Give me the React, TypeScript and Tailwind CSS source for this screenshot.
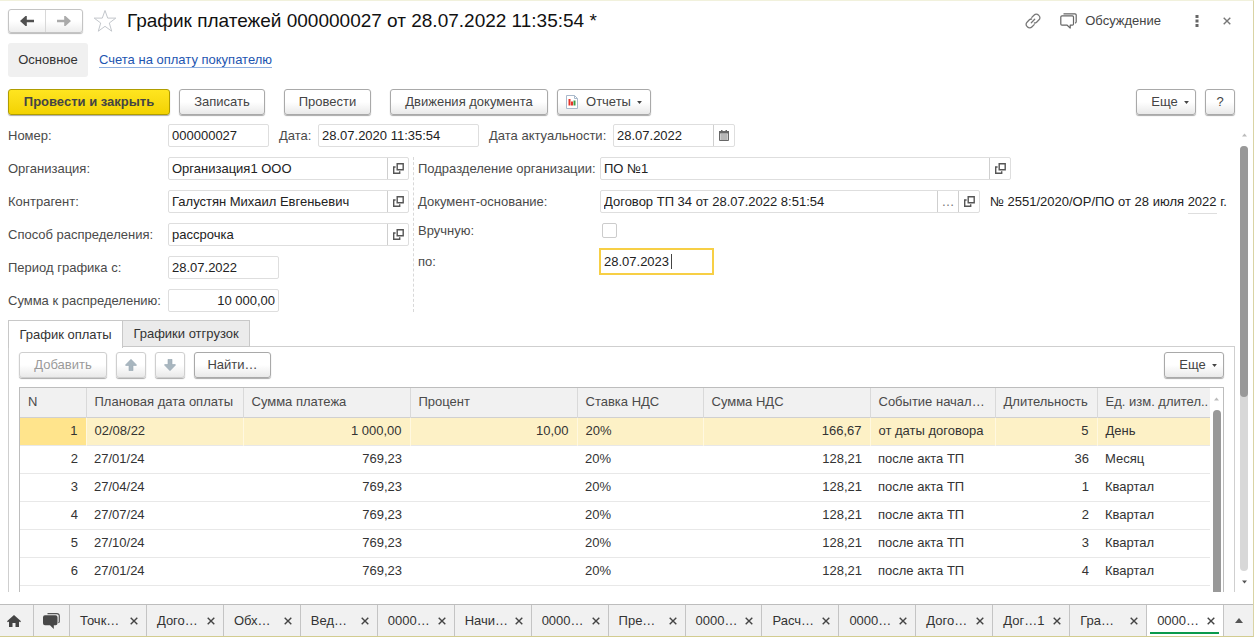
import type { ReactNode } from "react";
import clsx from "clsx";

type Align = "left" | "right";

type Column = {
  title: string;
  width: string; // Tailwind width class for the <col>
  align: Align;
};

const COLUMNS: Column[] = [
  { title: "N", width: "w-[66px]", align: "right" },
  { title: "Плановая дата оплаты", width: "w-[157px]", align: "left" },
  { title: "Сумма платежа", width: "w-[167px]", align: "right" },
  { title: "Процент", width: "w-[167px]", align: "right" },
  { title: "Ставка НДС", width: "w-[126px]", align: "left" },
  { title: "Сумма НДС", width: "w-[167px]", align: "right" },
  { title: "Событие начал…", width: "w-[125px]", align: "left" },
  { title: "Длительность", width: "w-[102px]", align: "right" },
  { title: "Ед. изм. длител..", width: "w-auto", align: "left" },
];

const ROWS: string[][] = [
  ["1", "02/08/22", "1 000,00", "10,00", "20%", "166,67", "от даты договора", "5", "День"],
  ["2", "27/01/24", "769,23", "", "20%", "128,21", "после акта ТП", "36", "Месяц"],
  ["3", "27/04/24", "769,23", "", "20%", "128,21", "после акта ТП", "1", "Квартал"],
  ["4", "27/07/24", "769,23", "", "20%", "128,21", "после акта ТП", "2", "Квартал"],
  ["5", "27/10/24", "769,23", "", "20%", "128,21", "после акта ТП", "3", "Квартал"],
  ["6", "27/01/24", "769,23", "", "20%", "128,21", "после акта ТП", "4", "Квартал"],
  ["", "", "", "", "", "", "", "", ""],
];

const WINDOWS = [
  "Точк…",
  "Дого…",
  "Обх…",
  "Вед…",
  "0000…",
  "Начи…",
  "0000…",
  "Пре…",
  "0000…",
  "Расч…",
  "0000…",
  "Дого…",
  "Дог…1",
  "Гра…",
  "0000…",
];

/* ================= ICONS ================= */

function ArrowIcon({ className }: { className?: string }) {
  return (
    <svg viewBox="0 0 14 10" className={clsx("h-[10px] w-[14px]", className)} aria-hidden="true">
      <path d="M0 5L5.500 0h1.300v3.700H14v2.600H6.800V10H5.500z" fill="currentColor" />
    </svg>
  );
}

function StarIcon() {
  return (
    <svg viewBox="0 0 24 24" className="h-6 w-6 text-[#c3c7cc]" aria-hidden="true">
      <path
        d="M12 1.5l2.7 7.6h8.1l-6.5 4.9 2.4 8.2-6.7-4.9-6.7 4.9 2.4-8.2L1.2 9.1h8.1z"
        fill="none"
        stroke="currentColor"
      />
    </svg>
  );
}

function LinkIcon() {
  return (
    <svg viewBox="0 0 16 16" className="h-4 w-4" aria-hidden="true">
      <g fill="none" stroke="#777" strokeWidth="1.3" strokeLinecap="round">
        <path d="M6.800 4.400l2.400-2.400a2.900 2.900 0 0 1 4.200 0l.6.6a2.900 2.900 0 0 1 0 4.200l-2.400 2.400a2.900 2.900 0 0 1-2.200.8" />
        <path d="M9.200 11.600L6.800 14a2.900 2.900 0 0 1-4.200 0l-.6-.6a2.900 2.900 0 0 1 0-4.200l2.400-2.400a2.900 2.900 0 0 1 2.200-.8" />
        <path d="M6.300 9.700l3.400-3.400" />
      </g>
    </svg>
  );
}

function ChatIcon() {
  return (
    <svg viewBox="0 0 17 16" className="h-4 w-[17px]" aria-hidden="true">
      <g fill="none" stroke="#666" strokeWidth="1.2" strokeLinejoin="round">
        <path d="M3.500.800h11.500q1.200 0 1.200 1.200v6.800q0 1.200-1.200 1.300" />
        <path d="M2 2.800h10.300q1.200 0 1.200 1.200v7q0 1.200-1.200 1.200h-2.100v2.900l-3-2.900H2Q.800 12.200.800 11V4Q.800 2.800 2 2.800z" />
      </g>
    </svg>
  );
}

function ChatSolidIcon() {
  return (
    <svg viewBox="0 0 17 16" className="h-4 w-[17px]" aria-hidden="true">
      <path
        d="M4.500.600H14a2.300 2.300 0 0 1 2.300 2.300v5.600q0 1-1 1.300"
        fill="none"
        stroke="#555"
        strokeWidth="1.2"
      />
      <path
        d="M2 2.200h10.500a2 2 0 0 1 2 2v6a2 2 0 0 1-2 2h-1.700v3.800L7 12.200H2a2 2 0 0 1-2-2v-6a2 2 0 0 1 2-2z"
        fill="#484848"
      />
    </svg>
  );
}

function HomeIcon() {
  return (
    <svg viewBox="0 0 14 12" className="h-3 w-[14px]" aria-hidden="true">
      <path d="M7 0l7 6.3-.9 1-1.100-.9V12H8.500V8h-3v4H2V6.400l-1.100.9-.9-1z" fill="#444" />
    </svg>
  );
}

function OpenIcon() {
  return (
    <svg viewBox="0 0 11 11" className="h-[11px] w-[11px]" aria-hidden="true">
      <path d="M4.200.7h6v6h-6z" fill="none" stroke="#555" strokeWidth="1.4" />
      <path d="M2.600 4H.7v6.200h6V8.300" fill="none" stroke="#555" strokeWidth="1.4" />
    </svg>
  );
}

function CalendarIcon() {
  return (
    <svg viewBox="0 0 10 11" className="h-[11px] w-[10px]" aria-hidden="true">
      <path d="M.5 1.500h9v9h-9z" fill="#e4e4e4" stroke="#666" />
      <path d="M0 1h10v2.500H0zM2 0h1.500v1H2zM6.500 0H8v1H6.500z" fill="#666" />
      <path d="M1.500 5h7M1.500 7h7M1.500 9h7" stroke="#888" />
    </svg>
  );
}

function ReportIcon() {
  return (
    <svg viewBox="0 0 12 14" className="h-[14px] w-3" aria-hidden="true">
      <path d="M.5.5h8l3 3v10H.5z" fill="#fff" stroke="#a9b9cb" />
      <path d="M8.500.5v3h3" fill="none" stroke="#a9b9cb" />
      <path d="M2.500 4h2v6.500h-2z" fill="#e5352a" />
      <path d="M5 6.500h2v4H5z" fill="#e5352a" />
      <path d="M7.500 5.500h2v5h-2z" fill="#3f9b45" />
    </svg>
  );
}

function MoveIcon({ down = false }: { down?: boolean }) {
  return (
    <svg viewBox="0 0 12 12" className={clsx("h-3 w-3", down && "rotate-180")} aria-hidden="true">
      <path d="M6 .3l5.300 5.400v.8H8v5.200H4V6.500H.7v-.8z" fill="#a8b6bf" stroke="#98a8b3" strokeWidth=".6" />
    </svg>
  );
}

function CloseIcon({ className }: { className?: string }) {
  return (
    <svg viewBox="0 0 8 8" className={clsx("h-2 w-2 shrink-0", className)} aria-hidden="true">
      <path d="M.7.7l6.600 6.600M7.300.7L.7 7.300" stroke="currentColor" strokeWidth="1.4" />
    </svg>
  );
}

function Triangle({ up = false, className }: { up?: boolean; className?: string }) {
  return (
    <svg viewBox="0 0 8 5" className={clsx(up && "rotate-180", className)} aria-hidden="true">
      <path d="M0 0h8L4 5z" fill="currentColor" />
    </svg>
  );
}

/* ================= CONTROLS ================= */

type ButtonProps = {
  children: ReactNode;
  className?: string;
  disabled?: boolean;
  label?: string;
};

function ToolButton({ children, className, disabled = false, label }: ButtonProps) {
  return (
    <button
      type="button"
      disabled={disabled}
      aria-label={label}
      className={clsx(
        "flex h-[26px] shrink-0 items-center justify-center rounded-[3px] border bg-linear-to-b from-white from-50% to-[#e9e9e9] shadow-[0_1px_1px_#aaa]",
        disabled ? "border-[#cfcfcf] text-[#9a9a9a]" : "border-[#a9a9a9] text-[#444]",
        className,
      )}
    >
      {children}
    </button>
  );
}

function MoreButton() {
  return (
    <ToolButton className="w-[60px] gap-[6px] pl-2">
      Еще
      <Triangle className="h-[3px] w-[5px]" />
    </ToolButton>
  );
}

type FieldProps = {
  id: string;
  value: string;
  className?: string;
  inputClassName?: string;
  children?: ReactNode; // Buttons at the right edge
};

function Field({ id, value, className, inputClassName, children }: FieldProps) {
  return (
    <div className={clsx("flex h-[23px] rounded-[2px] border border-[#dedede] bg-white", className)}>
      <input
        id={id}
        defaultValue={value}
        className={clsx("min-w-0 flex-1 bg-transparent px-[3px] text-[#222] outline-none", inputClassName)}
      />
      {children}
    </div>
  );
}

function FieldButton({ label, className, children }: ButtonProps) {
  return (
    <button
      type="button"
      aria-label={label}
      className={clsx("flex w-[21px] shrink-0 items-center justify-center border-l border-[#cfcfcf]", className)}
    >
      {children}
    </button>
  );
}

type LabelProps = {
  htmlFor: string;
  className?: string;
  children: ReactNode;
};

function Label({ htmlFor, className, children }: LabelProps) {
  return (
    <label htmlFor={htmlFor} className={clsx("shrink-0 whitespace-nowrap text-[#4a4a4a]", className)}>
      {children}
    </label>
  );
}

/* ================= SECTIONS ================= */

function Header() {
  return (
    <header className="flex h-10 shrink-0 items-center pr-[22px] pl-2">
      <div className="flex h-6 w-[75px] rounded-[3px] border border-[#c4c4c4] bg-linear-to-b from-white from-50% to-[#ededed] shadow-[0_1px_1px_#bbb]">
        <button type="button" aria-label="Назад" className="flex flex-1 items-center justify-center text-[#505050]">
          <ArrowIcon />
        </button>
        <button
          type="button"
          aria-label="Вперед"
          className="flex flex-1 items-center justify-center border-l border-[#d8d8d8] text-[#aaa]"
        >
          <ArrowIcon className="rotate-180" />
        </button>
      </div>
      <button type="button" aria-label="В избранное" className="ml-[10px]">
        <StarIcon />
      </button>
      <h1 className="ml-[10px] text-[19px] whitespace-nowrap text-[#111]">
        График платежей 000000027 от 28.07.2022 11:35:54 *
      </h1>
      <div className="ml-auto flex items-center">
        <button type="button" aria-label="Ссылка">
          <LinkIcon />
        </button>
        <button type="button" className="ml-[19px] flex items-center gap-2 text-[#444]">
          <ChatIcon />
          Обсуждение
        </button>
        <button type="button" aria-label="Меню" className="ml-[34px]">
          <svg viewBox="0 0 4 12" className="h-3 w-1" aria-hidden="true">
            <path d="M.5 0h3v3h-3zM.5 4.500h3v3h-3zM.5 9h3v3h-3z" fill="#666" />
          </svg>
        </button>
        <button type="button" aria-label="Закрыть" className="ml-6 text-[#777]">
          <CloseIcon />
        </button>
      </div>
    </header>
  );
}

function CommandBar() {
  return (
    <div className="mt-3 flex shrink-0 items-center pr-[18px] pl-2">
      <button
        type="button"
        className="h-[26px] w-[162px] rounded-[3px] border border-[#b09d00] bg-linear-to-b from-[#ffe51f] to-[#f3d200] font-bold text-[#444] shadow-[0_1px_1px_#aaa]"
      >
        Провести и закрыть
      </button>
      <ToolButton className="ml-[9px] w-[86px]">Записать</ToolButton>
      <ToolButton className="ml-[19px] w-[87px]">Провести</ToolButton>
      <ToolButton className="ml-[19px] w-[158px]">Движения документа</ToolButton>
      <ToolButton className="ml-[9px] w-[94px]">
        <ReportIcon />
        <span className="mr-[6px] ml-2">Отчеты</span>
        <Triangle className="h-[3px] w-[5px]" />
      </ToolButton>
      <div className="ml-auto flex gap-[9px]">
        <MoreButton />
        <ToolButton className="w-[30px]">?</ToolButton>
      </div>
    </div>
  );
}

function DocumentForm() {
  return (
    <div className="flex flex-col gap-[10px]">
      <div className="flex items-center">
        <Label htmlFor="number" className="w-[160px]">
          Номер:
        </Label>
        <Field id="number" value="000000027" className="w-[101px]" />
        <Label htmlFor="date" className="ml-[10px] w-[39px]">
          Дата:
        </Label>
        <Field id="date" value="28.07.2020 11:35:54" className="w-[161px]" />
        <Label htmlFor="actual" className="ml-[10px] w-[124px]">
          Дата актуальности:
        </Label>
        <Field id="actual" value="28.07.2022" className="w-[122px] border-[#b5b5b5]">
          <FieldButton label="Календарь" className="border-[#b5b5b5]">
            <CalendarIcon />
          </FieldButton>
        </Field>
      </div>

      <div className="flex">
        {/* Left column */}
        <div className="flex w-[406px] shrink-0 flex-col gap-[10px] border-r border-dashed border-[#d8d8d8] pr-1">
          <div className="flex items-center">
            <Label htmlFor="org" className="w-[160px]">
              Организация:
            </Label>
            <Field id="org" value="Организация1 ООО" className="flex-1">
              <FieldButton label="Открыть организацию">
                <OpenIcon />
              </FieldButton>
            </Field>
          </div>
          <div className="flex items-center">
            <Label htmlFor="partner" className="w-[160px]">
              Контрагент:
            </Label>
            <Field id="partner" value="Галустян Михаил Евгеньевич" className="flex-1">
              <FieldButton label="Открыть контрагента">
                <OpenIcon />
              </FieldButton>
            </Field>
          </div>
          <div className="flex items-center">
            <Label htmlFor="method" className="w-[160px]">
              Способ распределения:
            </Label>
            <Field id="method" value="рассрочка" className="flex-1">
              <FieldButton label="Открыть способ">
                <OpenIcon />
              </FieldButton>
            </Field>
          </div>
          <div className="flex items-center">
            <Label htmlFor="from" className="w-[160px]">
              Период графика с:
            </Label>
            <Field id="from" value="28.07.2022" className="w-[111px]" />
          </div>
          <div className="flex items-center">
            <Label htmlFor="total" className="w-[160px]">
              Сумма к распределению:
            </Label>
            <Field id="total" value="10 000,00" className="w-[111px]" inputClassName="text-right" />
          </div>
        </div>

        {/* Right column */}
        <div className="flex min-w-0 flex-1 flex-col gap-[10px] pl-1">
          <div className="flex items-center">
            <Label htmlFor="department" className="w-[182px]">
              Подразделение организации:
            </Label>
            <Field id="department" value="ПО №1" className="w-[411px]">
              <FieldButton label="Открыть подразделение">
                <OpenIcon />
              </FieldButton>
            </Field>
          </div>
          <div className="flex items-center">
            <Label htmlFor="base" className="w-[182px]">
              Документ-основание:
            </Label>
            <Field id="base" value="Договор ТП 34 от 28.07.2022 8:51:54" className="w-[380px]">
              <FieldButton label="Выбрать основание" className="text-[#777]">
                …
              </FieldButton>
              <FieldButton label="Открыть основание">
                <OpenIcon />
              </FieldButton>
            </Field>
            <span className="ml-[10px] whitespace-nowrap text-[#222]">
              № 2551/2020/ОР/ПО от 28 июля <span className="border-b border-[#dedede] pb-1">2022</span> г.
            </span>
          </div>
          <div className="flex h-[15px] items-center">
            <Label htmlFor="manual" className="w-[184px]">
              Вручную:
            </Label>
            <input
              id="manual"
              type="checkbox"
              className="h-[15px] w-[15px] appearance-none rounded-[2px] border border-[#ccc] bg-white"
            />
          </div>
          <div className="flex items-center">
            <Label htmlFor="to" className="w-[181px]">
              по:
            </Label>
            <div className="relative flex h-[27px] w-[115px] border-2 border-[#f7cf45] bg-white">
              <input
                id="to"
                defaultValue="28.07.2023"
                className="min-w-0 flex-1 bg-transparent px-[3px] text-[#222] outline-none"
              />
              {/* Text cursor */}
              <span className="absolute top-1 left-[70px] h-[15px] w-px bg-[#444]" />
            </div>
          </div>
        </div>
      </div>
    </div>
  );
}

function PaymentTable() {
  return (
    <div className="mt-[9px] flex min-h-0 flex-1 overflow-hidden border border-b-0 border-[#bdbdbd]">
      <div className="min-w-0 flex-1">
        <table className="w-full table-fixed border-collapse">
          <colgroup>
            {COLUMNS.map((column) => (
              <col key={column.title} className={column.width} />
            ))}
          </colgroup>
          <thead>
            <tr className="h-[29px] border-b border-[#d0d0d0] bg-[#f1f1f1]">
              {COLUMNS.map((column) => (
                <th
                  key={column.title}
                  className="overflow-hidden border-r border-[#d9d9d9] pl-2 text-left font-normal whitespace-nowrap text-[#4a4a4a] last:border-r-0"
                >
                  {column.title}
                </th>
              ))}
            </tr>
          </thead>
          <tbody>
            {ROWS.map((row, rowIndex) => (
              <tr
                key={rowIndex}
                className={clsx("h-7 border-b border-[#e8e8e8]", rowIndex === 0 && "bg-[#fdf1c6]")}
              >
                {row.map((cell, cellIndex) => (
                  <td
                    key={cellIndex}
                    className={clsx(
                      "px-2 whitespace-nowrap text-[#333]",
                      COLUMNS[cellIndex].align === "right" && "text-right",
                      rowIndex === 0 && "border-r border-[#fff8e0] last:border-r-0",
                      rowIndex === 0 && cellIndex === 0 && "bg-[#ffe48c]",
                    )}
                  >
                    {cell}
                  </td>
                ))}
              </tr>
            ))}
          </tbody>
        </table>
      </div>
      <div className="flex w-[13px] shrink-0 flex-col items-center pt-[9px]">
        <Triangle up className="h-1 w-[5px] text-[#bbb]" />
        <div className="mt-[9px] w-2 flex-1 rounded-t-full bg-[#999]" />
      </div>
    </div>
  );
}

function TaskBar() {
  return (
    <footer className="mt-3 flex h-8 shrink-0 border-t border-[#bdbdbd] bg-[#f1f1f1]">
      <button type="button" aria-label="Главная" className="flex w-[33px] shrink-0 items-center pl-[7px]">
        <HomeIcon />
      </button>
      <button
        type="button"
        aria-label="Обсуждения"
        className="flex w-9 shrink-0 items-center justify-center border-l border-[#c4c4c4]"
      >
        <ChatSolidIcon />
      </button>
      {WINDOWS.map((title, index) => {
        const active = index === WINDOWS.length - 1;
        return (
          <button
            key={index}
            type="button"
            className={clsx(
              "relative flex min-w-0 flex-1 items-center justify-between border-l border-[#c4c4c4] pr-2 pl-[10px] whitespace-nowrap text-[#333]",
              active && "bg-white",
            )}
          >
            {title}
            <CloseIcon className="text-[#444]" />
            {active && <span className="absolute right-1 bottom-[2px] left-[3px] h-[2px] bg-[#0a9a4c]" />}
          </button>
        );
      })}
      <button
        type="button"
        aria-label="Все окна"
        className="flex w-[30px] shrink-0 items-center justify-center border-l border-[#c4c4c4] text-[#555]"
      >
        <Triangle up className="h-[5px] w-2" />
      </button>
    </footer>
  );
}

export default function App() {
  return (
    <div className="flex h-screen flex-col overflow-hidden border-t border-r border-b border-t-[#f1f1dc] border-r-[#d9d4a4] border-b-[#d2cc90] bg-white font-['Liberation_Sans',Arial,sans-serif] text-[13px] leading-4">
      <Header />

      <nav className="mt-[2px] flex h-[34px] shrink-0 items-center gap-[11px] pl-2">
        <button type="button" className="h-full w-[80px] rounded-[3px] bg-[#f0f0f0] text-[#333]">
          Основное
        </button>
        <a href="#invoices" className="border-b border-[#8fb0e0] leading-[14px] text-[#1d55b0]">
          Счета на оплату покупателю
        </a>
      </nav>

      <CommandBar />

      <div className="mt-[9px] flex min-h-0 flex-1">
        <main className="flex min-w-0 flex-1 flex-col pl-2">
          <DocumentForm />

          {/* ================= TABS ================= */}
          <div role="tablist" className="relative z-10 mt-2 flex h-[27px] shrink-0">
            <button
              type="button"
              role="tab"
              aria-selected="true"
              className="-mb-px w-[115px] border border-b-0 border-[#c8c8c8] bg-white text-[#333]"
            >
              График оплаты
            </button>
            <button
              type="button"
              role="tab"
              aria-selected="false"
              className="w-[127px] border border-l-0 border-[#c8c8c8] bg-[#ebebeb] text-[#333]"
            >
              Графики отгрузок
            </button>
          </div>
          <section className="-mt-px flex min-h-0 flex-1 flex-col border border-b-0 border-[#cfcfcf] px-[10px] pt-[5px]">
            <div className="flex shrink-0 items-center gap-[9px]">
              <ToolButton disabled className="w-[88px]">
                Добавить
              </ToolButton>
              <ToolButton disabled label="Вверх" className="w-[30px]">
                <MoveIcon />
              </ToolButton>
              <ToolButton disabled label="Вниз" className="w-[30px]">
                <MoveIcon down />
              </ToolButton>
              <ToolButton className="w-[77px]">Найти…</ToolButton>
              <div className="ml-auto">
                <MoreButton />
              </div>
            </div>
            <PaymentTable />
          </section>
        </main>

        {/* Page scroll bar */}
        <div className="flex w-[18px] shrink-0 flex-col items-center pt-[9px] pb-2">
          <Triangle up className="h-1 w-[5px] text-[#bbb]" />
          <div className="mt-[9px] w-2 flex-1 rounded-full bg-[#d8d8d8]">
            <div className="h-[59%] rounded-full bg-[#999]" />
          </div>
          <Triangle className="mt-[9px] h-1 w-[5px] text-[#555]" />
        </div>
      </div>

      <TaskBar />
    </div>
  );
}
